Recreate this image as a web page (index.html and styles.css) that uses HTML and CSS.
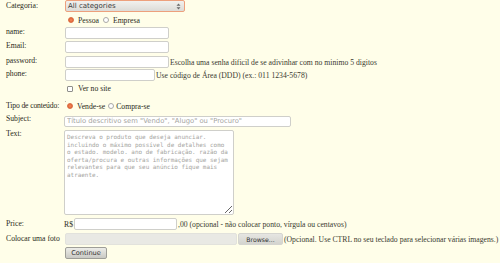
FILE: index.html
```html
<!DOCTYPE html>
<html lang="pt">
<head>
<meta charset="utf-8">
<title>Anunciar</title>
<link rel="stylesheet" href="styles.css">
</head>
<body>
<form class="form">
  <label class="lbl lbl-mid">Categoria:</label>
  <div class="fld">
    <div class="select">
      <span class="select-text">All categories</span>
      <svg class="select-arrow" width="5" height="7" viewBox="0 0 5 7"><path d="M0.5 2.8 L2.5 0.6 L4.5 2.8 Z M0.5 4.2 L2.5 6.4 L4.5 4.2 Z" fill="#6a6a6a"/></svg>
    </div>
  </div>

  <div class="fld fld-sm radios row-person">
    <label class="opt"><input class="radio" type="radio" name="pessoa" checked><span>Pessoa</span></label>
    <label class="opt opt-gap"><input class="radio" type="radio" name="pessoa"><span>Empresa</span></label>
  </div>

  <label class="lbl">name:</label>
  <div class="fld"><input class="txt w103" type="text"></div>

  <label class="lbl">Email:</label>
  <div class="fld"><input class="txt w103" type="text"></div>

  <label class="lbl">password:</label>
  <div class="fld"><input class="txt w103" type="password"><span class="hint">Escolha uma senha dificil de se adivinhar com no minimo 5 digitos</span></div>

  <label class="lbl">phone:</label>
  <div class="fld"><input class="txt w89" type="text"><span class="hint">Use código de Área (DDD) (ex.: 011 1234-5678)</span></div>

  <div class="fld fld-check row-check">
    <label class="opt"><input class="check" type="checkbox"><span>Ver no site</span></label>
  </div>

  <div class="fld row-dot"><span class="dot"></span></div>

  <label class="lbl lbl-tipo">Tipo de conteúdo:</label>
  <div class="fld fld-tipo radios">
    <label class="opt opt-tipo"><input class="radio" type="radio" name="tipo" checked><span>Vende-se</span></label>
    <label class="opt opt-tipo2"><input class="radio" type="radio" name="tipo"><span>Compra-se</span></label>
  </div>

  <label class="lbl lbl-subject">Subject:</label>
  <div class="fld fld-left"><input class="txt subject" type="text" placeholder="Título descritivo sem &quot;Vendo&quot;, &quot;Alugo&quot; ou &quot;Procuro&quot;"></div>

  <label class="lbl lbl-text">Text:</label>
  <div class="fld fld-left fld-area"><textarea class="area" placeholder="Descreva o produto que deseja anunciar. incluindo o máximo possível de detalhes como o estado. modelo. ano de fabricação. razão da oferta/procura e outras informações que sejam relevantes para que seu anúncio fique mais atraente."></textarea></div>

  <label class="lbl lbl-mid">Price:</label>
  <div class="fld fld-left"><span class="cur">R$</span><input class="txt price" type="text"><span class="hint hint-price">,00 (opcional - não colocar ponto, vírgula ou centavos)</span></div>

  <label class="lbl lbl-mid">Colocar uma foto</label>
  <div class="fld"><span class="file-field"></span><button class="browse" type="button">Browse...</button><span class="hint hint-file">(Opcional. Use CTRL no seu teclado para selecionar várias imagens.)</span></div>

  <div class="fld row-btn"><button class="continue" type="button">Continue</button></div>
</form>
</body>
</html>
```

FILE: styles.css
```css
html, body {
  margin: 0;
  padding: 0;
}
body {
  background: #fffee9;
  font-family: "Liberation Serif", "Times New Roman", serif;
  font-size: 7.7px;
  color: #2a2a20;
  width: 500px;
  height: 263px;
  overflow: hidden;
}
.form {
  display: grid;
  grid-template-columns: 59px 1fr;
  grid-template-rows: 14px 13px 14px 15px 13px 14px 11px 7px 14px 15px 88px 15px 14px 16px;
  padding-left: 6px;
}
.lbl {
  grid-column: 1;
  line-height: 9px;
  white-space: nowrap;
  align-self: start;
}
.lbl-mid {
  line-height: 12px;
}
.lbl-tipo {
  line-height: 10px;
  letter-spacing: -0.15px;
}
.lbl-subject {
  line-height: 7px;
}
.lbl-text {
  line-height: 7px;
}
.fld {
  grid-column: 2;
  display: flex;
  align-items: center;
  align-self: start;
  height: 12px;
  white-space: nowrap;
}
.fld-sm { height: 12px; }
.fld-check { height: 11px; }
.fld-tipo { height: 10px; }
.fld-left { margin-left: -1px; }
.fld-area {
  height: auto;
  align-items: flex-start;
}
.row-person, .row-check, .row-dot, .row-btn { grid-column: 2; }

/* select */
.select {
  box-sizing: border-box;
  width: 120px;
  height: 12px;
  border: 1px solid #eda07c;
  border-radius: 2px;
  background: linear-gradient(#f2f1ee, #dcdbd7);
  display: flex;
  align-items: center;
  justify-content: space-between;
  padding: 0 3px 0 2px;
  font-family: "DejaVu Sans", sans-serif;
  font-size: 7px;
  color: #3c3c3c;
}
.select-arrow { display: block; }

/* radios / checkbox */
.opt {
  display: flex;
  align-items: center;
}
.radio, .check {
  appearance: none;
  -webkit-appearance: none;
  margin: 0;
  box-sizing: border-box;
  flex: none;
}
.radio {
  width: 6px;
  height: 6px;
  border-radius: 50%;
  border: 1px solid #a9a9a6;
  background: #fff;
  margin-left: 3px;
  margin-right: 4px;
}
.radio:checked {
  border-color: #d8693f;
  background: radial-gradient(circle, #f28a5e 0, #e5673a 70%);
}
.check {
  width: 6px;
  height: 6px;
  border: 1px solid #8e8e8a;
  border-radius: 1px;
  background: #fff;
  margin-left: 2px;
  margin-right: 5px;
}
.opt-gap { margin-left: 1px; }
.opt-gap .radio { margin-right: 4px; }
.fld-tipo .radio { margin-left: 2px; margin-right: 4px; }
.opt-tipo2 .radio { margin-left: 3px; margin-right: 2px; }

/* text inputs */
.txt {
  box-sizing: border-box;
  height: 12px;
  margin: 0;
  padding: 0 2px;
  border: 1px solid #cfcfca;
  border-radius: 2px;
  background: #fff;
  font-family: "DejaVu Sans", sans-serif;
  font-size: 6.8px;
  color: #333;
  outline: none;
}
.w103 { width: 104px; }
.w89 { width: 90px; }
.subject {
  width: 227px;
  height: 11px;
}
.txt::placeholder, .area::placeholder {
  color: #a5a5a1;
  opacity: 1;
}
.area {
  box-sizing: border-box;
  width: 170px;
  height: 85px;
  margin: 0;
  padding: 2px 2px;
  border: 1px solid #cfcfca;
  border-radius: 2px;
  background: #fff;
  font-family: "DejaVu Sans Mono", monospace;
  font-size: 5.95px;
  line-height: 7.6px;
  resize: both;
  outline: none;
}
.hint {
  margin-left: 1px;
  color: #3a3a30;
}
.cur { margin-right: 1px; }
.price { width: 103px; }
.hint-price { margin-left: 1px; }

.dot {
  width: 1px;
  height: 1px;
  background: #b8b8a8;
  margin-top: 2px;
}

/* file */
.file-field {
  box-sizing: border-box;
  width: 172px;
  height: 12px;
  background: #e9e9e4;
  border: 1px solid #e2e2dc;
  border-radius: 2px;
}
.browse, .continue {
  box-sizing: border-box;
  height: 12px;
  margin: 0;
  padding: 0 4px;
  font-family: "DejaVu Sans", sans-serif;
  color: #333;
  cursor: pointer;
}
.browse {
  width: 45px;
  margin-left: 1px;
  font-size: 6.2px;
  border: 1px solid #d5d5d0;
  border-radius: 2px;
  background: linear-gradient(#e6e6e2, #d4d4cf);
}
.hint-file { margin-left: 1px; }
.continue {
  width: 42px;
  font-size: 6.6px;
  border: 1px solid #9e9e98;
  border-radius: 2px;
  background: linear-gradient(#ecece8, #c9c9c4);
}
```
